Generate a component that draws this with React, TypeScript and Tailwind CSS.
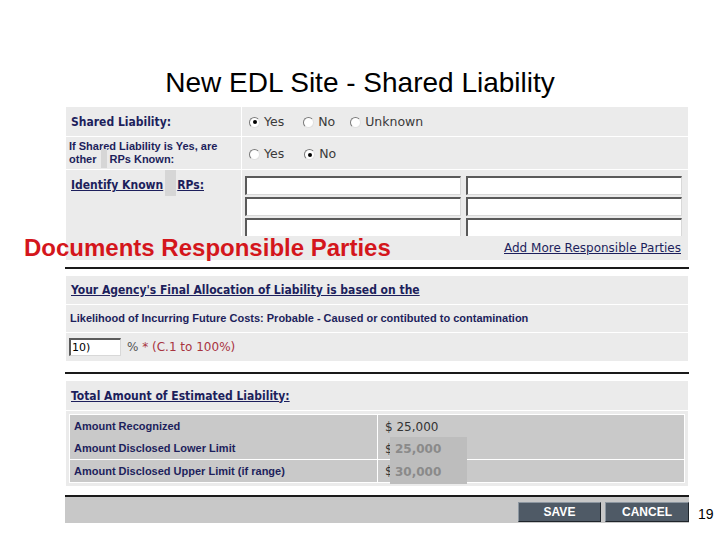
import React from "react";

const navy = "text-[#1d1f5c]";
const verdana = "font-['DejaVu_Sans',sans-serif]";
const cond = "font-['DejaVu_Sans_Condensed','DejaVu_Sans',sans-serif]";
const narrow = "font-['Liberation_Sans_Narrow','Liberation_Sans',sans-serif]";

const Radio = ({ checked, label }: { checked?: boolean; label: string }) => (
  <span className="flex items-center gap-[4px]">
    <span className="w-[11px] h-[11px] rounded-full bg-white border border-t-[#7a7a7a] border-l-[#7a7a7a] border-b-[#e0e0e0] border-r-[#e0e0e0] flex items-center justify-center">
      {checked ? <span className="w-[4px] h-[4px] rounded-full bg-black" /> : null}
    </span>
    <span className={`${verdana} text-[12.5px] text-[#3a3a3a]`}>{label}</span>
  </span>
);

const TextBox = ({ className = "", value = "" }: { className?: string; value?: string }) => (
  <div
    className={`bg-white border-t-2 border-l-2 border-t-[#5a5a5a] border-l-[#5a5a5a] border-b border-r border-b-[#d8d8d8] border-r-[#d8d8d8] text-[11px] leading-[15px] pl-px ${verdana} text-black ${className}`}
  >
    {value}
  </div>
);

const Rule = () => <div className="h-[2px] bg-[#1a1a1a] w-[624px]" />;

const Btn = ({ label, w }: { label: string; w: string }) => (
  <div
    className={`${w} h-[20px] bg-[#4f5a66] border border-t-[#8d97a1] border-l-[#8d97a1] border-b-[#1e242a] border-r-[#1e242a] flex items-center justify-center text-white font-bold text-[12px] font-['Liberation_Sans',sans-serif]`}
  >
    {label}
  </div>
);

export default function App() {
  return (
    <div className="w-[720px] h-[540px] bg-white overflow-hidden">
      <div className="h-[107px] pt-[67px] text-center text-[28px] leading-[32px] text-black font-['Liberation_Sans',sans-serif]">
        New EDL Site - Shared Liability
      </div>

      <div className="ml-[65px] w-[655px]">
        {/* shared liability panel */}
        <div className="ml-px w-[622px] bg-[#ebebeb]">
          <div className="h-[30px] grid grid-cols-[175px_1fr] border-b border-white">
            <div className={`${cond} font-bold text-[12px] ${navy} pl-[5px] flex items-center`}>
              Shared Liability:
            </div>
            <div className="border-l border-white flex items-center pl-[7px] pt-px">
              <Radio checked label="Yes" />
              <span className="w-[19px]" />
              <Radio label="No" />
              <span className="w-[15px]" />
              <Radio label="Unknown" />
            </div>
          </div>
          <div className="h-[33px] grid grid-cols-[175px_1fr] border-b border-white">
            <div className={`${narrow} font-bold text-[11px] leading-[13px] ${navy} pl-[3px] pt-[3px]`}>
              If Shared Liability is Yes, are
              <br />
              other
              <span className="inline-block w-[13px] h-[17px] align-top relative">
                <span className="absolute left-[4px] -top-[4px] w-[6px] h-[19px] bg-[#d6d6d6]" />
              </span>
              RPs Known:
            </div>
            <div className="border-l border-white flex items-center gap-[20px] pl-[7px] pt-[2px]">
              <Radio label="Yes" />
              <Radio checked label="No" />
            </div>
          </div>
          <div className="h-[66px] grid grid-cols-[175px_1fr] overflow-hidden">
            <div className={`${cond} font-bold text-[12px] ${navy} pl-[5px] pt-[6px]`}>
              <span className="underline">Identify Known</span>
              <span className="inline-block w-[14px] h-[14px] align-top relative">
                <span className="absolute left-[2px] -top-[9px] w-[11px] h-[29px] bg-[#d6d6d6]" />
              </span>
              <span className="underline">RPs:</span>
            </div>
            <div className="border-l border-white pl-[3px] pt-[6px] grid grid-cols-[216px_216px] gap-x-[5px] gap-y-[2px] content-start">
              <TextBox className="h-[19px]" />
              <TextBox className="h-[19px]" />
              <TextBox className="h-[19px]" />
              <TextBox className="h-[19px]" />
              <TextBox className="h-[19px]" />
              <TextBox className="h-[19px]" />
            </div>
          </div>
          <div className="h-[24px] flex items-center justify-between pr-[7px]">
            <span className="-ml-[42px] text-[24px] leading-[24px] font-bold text-[#d4161c] font-['Liberation_Sans',sans-serif]">
              Documents Responsible Parties
            </span>
            <span className={`${verdana} text-[12px] ${navy} underline`}>
              Add More Responsible Parties
            </span>
          </div>
        </div>

        <div className="h-[7px]" />
        <Rule />
        <div className="h-[7px]" />

        {/* allocation panel */}
        <div className="ml-px w-[622px] bg-[#ebebeb]">
          <div className={`h-[29px] border-b border-white flex items-center pl-[5px] ${cond} font-bold text-[12px] ${navy}`}>
            <span className="underline">Your Agency's Final Allocation of Liability is based on the</span>
          </div>
          <div className={`h-[28px] border-b border-white flex items-center pl-[4px] ${narrow} font-bold text-[11px] ${navy}`}>
            Likelihood of Incurring Future Costs: Probable - Caused or contibuted to contamination
          </div>
          <div className="h-[28px] flex items-center pl-[3px] gap-[6px]">
            <TextBox className="w-[52px] h-[18px]" value="10)" />
            <span className={`${verdana} text-[12px]`}>
              <span className="text-[#555]">%</span>
              <span className="text-[#a8343f]"> * (C.1 to 100%)</span>
            </span>
          </div>
        </div>

        <div className="h-[11px]" />
        <Rule />
        <div className="h-[7px]" />

        {/* estimated liability panel */}
        <div className="ml-px w-[622px] bg-[#ebebeb] pb-[3px]">
          <div className={`h-[30px] border-b border-white flex items-center pl-[5px] ${cond} font-bold text-[12px] ${navy}`}>
            <span className="underline">Total Amount of Estimated Liability:</span>
          </div>
          <div className="mx-[3px] mt-[3px] border border-white bg-[#c9c9c9] relative">
            <div className="h-[23px] grid grid-cols-[307px_1fr]">
              <div className={`${narrow} font-bold text-[11px] ${navy} pl-[4px] flex items-center`}>Amount Recognized</div>
              <div className={`border-l border-white pl-[7px] flex items-center ${verdana} text-[12px] text-[#333]`}>$ 25,000</div>
            </div>
            <div className="h-[22px] grid grid-cols-[307px_1fr] border-b border-white">
              <div className={`${narrow} font-bold text-[11px] ${navy} pl-[4px] flex items-center`}>Amount Disclosed Lower Limit</div>
              <div className={`border-l border-white pl-[7px] flex items-center ${verdana} text-[12px] text-[#333]`}>$</div>
            </div>
            <div className="h-[22px] grid grid-cols-[307px_1fr]">
              <div className={`${narrow} font-bold text-[11px] ${navy} pl-[4px] flex items-center`}>Amount Disclosed Upper Limit (if range)</div>
              <div className={`border-l border-white pl-[7px] flex items-center ${verdana} text-[12px] text-[#333]`}>$</div>
            </div>
            <div className={`absolute left-[320px] top-[22px] w-[77px] h-[47px] bg-[#bdbdbd] flex flex-col pl-[5px] ${verdana} font-bold text-[12px] text-[#8a8a8a]`}>
              <span className="h-[23px] flex items-center">25,000</span>
              <span className="h-[23px] flex items-center">30,000</span>
            </div>
          </div>
        </div>

        <div className="h-[9px]" />
        <Rule />
        <div className="flex items-end">
          <div className="w-[624px] h-[26px] bg-[#c8c8c8] flex items-start justify-end gap-[4px] pt-[5px]">
            <Btn label="SAVE" w="w-[83px]" />
            <Btn label="CANCEL" w="w-[84px]" />
          </div>
          <span className="ml-[9px] mb-[1px] text-[14px] leading-[16px] text-black font-['Liberation_Sans',sans-serif]">19</span>
        </div>
      </div>
    </div>
  );
}
